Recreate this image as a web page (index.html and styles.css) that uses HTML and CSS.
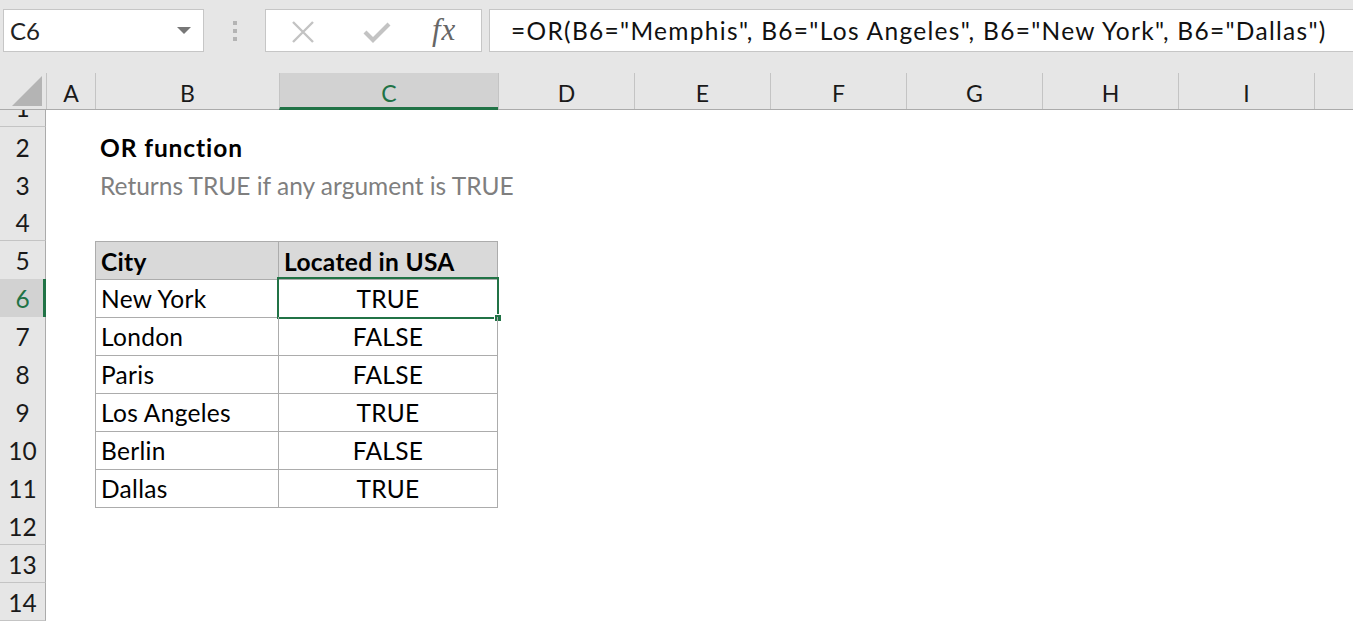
FILE: index.html
```html
<!DOCTYPE html>
<html>
<head>
<meta charset="utf-8">
<link rel="stylesheet" href="styles.css">
</head>
<body>
<div class="app">
  <div class="toolbar">
    <div class="namebox">
      <span class="name">C6</span>
      <svg class="caret" width="14" height="8" viewBox="0 0 14 8"><path d="M0 0H14L7 7Z" fill="#777"/></svg>
    </div>
    <div class="grip"><i></i><i></i><i></i></div>
    <div class="fbuttons">
      <svg class="ico" width="26" height="26" viewBox="0 0 26 26"><path d="M3 3L23 23M23 3L3 23" stroke="#c3c3c3" stroke-width="2.4" fill="none"/></svg>
      <svg class="ico" width="30" height="26" viewBox="0 0 30 26"><path d="M3 13L11 21L27 5" stroke="#c3c3c3" stroke-width="4.2" fill="none"/></svg>
      <span class="fx">fx</span>
    </div>
    <div class="formula">=OR(B6="Memphis", B6="Los Angeles", B6="New York", B6="Dallas")</div>
  </div>

  <div class="sheet">
    <div class="row colhead">
      <div class="corner"><svg width="32" height="32" viewBox="0 0 32 32"><path d="M31 1V31H1Z" fill="#b4b4b4"/></svg></div>
      <div class="ch">A</div><div class="ch">B</div><div class="ch sel">C</div><div class="ch">D</div><div class="ch">E</div><div class="ch">F</div><div class="ch">G</div><div class="ch">H</div><div class="ch">I</div><div class="ch"></div>
    </div>
    <div class="row r1"><div class="rh"><span>1</span></div></div>
    <div class="row"><div class="rh">2</div><div class="cell b title">OR function</div></div>
    <div class="row"><div class="rh">3</div><div class="cell b sub">Returns TRUE if any argument is TRUE</div></div>
    <div class="row"><div class="rh">4</div></div>
    <div class="row"><div class="rh">5</div><div class="cell b tb th top left">City</div><div class="cell c tb th top">Located in USA</div></div>
    <div class="row"><div class="rh selr">6</div><div class="cell b tb left">New York</div><div class="cell c tb ctr active">TRUE<span class="selbox"><span class="handle"></span></span></div></div>
    <div class="row"><div class="rh">7</div><div class="cell b tb left">London</div><div class="cell c tb ctr">FALSE</div></div>
    <div class="row"><div class="rh">8</div><div class="cell b tb left">Paris</div><div class="cell c tb ctr">FALSE</div></div>
    <div class="row"><div class="rh">9</div><div class="cell b tb left">Los Angeles</div><div class="cell c tb ctr">TRUE</div></div>
    <div class="row"><div class="rh">10</div><div class="cell b tb left">Berlin</div><div class="cell c tb ctr">FALSE</div></div>
    <div class="row"><div class="rh">11</div><div class="cell b tb left">Dallas</div><div class="cell c tb ctr">TRUE</div></div>
    <div class="row"><div class="rh">12</div></div>
    <div class="row"><div class="rh">13</div></div>
    <div class="row"><div class="rh">14</div></div>
  </div>
</div>
</body>
</html>
```

FILE: styles.css
```css
* { box-sizing: border-box; }
html, body { margin: 0; padding: 0; }
body {
  width: 1353px;
  height: 621px;
  overflow: hidden;
  background: #fff;
  font-family: "Lato", "Open Sans", sans-serif;
  font-variant-ligatures: none;
  color: #000;
}
.app { display: flex; flex-direction: column; height: 621px; }

.toolbar {
  height: 73px;
  flex: none;
  background: #e6e6e6;
  display: flex;
  align-items: flex-start;
  padding: 9px 0 0 3px;
}
.namebox {
  width: 201px;
  height: 43px;
  background: #fff;
  border: 1px solid #c6c6c6;
  display: flex;
  align-items: center;
  justify-content: space-between;
  padding: 0 12px 0 6px;
}
.name { font-size: 24px; color: #222; }
.caret { margin-top: 1px; }
.grip {
  width: 61px;
  height: 43px;
  display: flex;
  flex-direction: column;
  align-items: center;
  justify-content: center;
  gap: 4px;
}
.grip i { display: block; width: 4px; height: 4px; background: #b4b4b4; }
.fbuttons {
  width: 217px;
  height: 43px;
  background: #fff;
  border: 1px solid #c6c6c6;
  display: flex;
  align-items: center;
  padding: 0 0 0 24px;
}
.fbuttons .ico:nth-child(1) { margin-right: 46px; margin-top: 2px; }
.fbuttons .ico:nth-child(2) { margin-right: 40px; margin-top: 2px; }
.fx {
  font-family: "Liberation Serif", serif;
  font-style: italic;
  font-size: 31px;
  color: #666;
  letter-spacing: 1px;
  margin-top: -2px;
}
.formula {
  margin-left: 7px;
  flex: 1;
  height: 43px;
  background: #fff;
  border: 1px solid #c6c6c6;
  border-right: none;
  font-size: 24.5px;
  letter-spacing: 1.3px;
  line-height: 41px;
  padding-left: 21px;
  color: #111;
  white-space: nowrap;
}

.sheet { flex: 1; display: flex; flex-direction: column; overflow: hidden; }
.row {
  display: grid;
  grid-template-columns: 46px 49px 184px 219px 136px 136px 136px 136px 136px 136px 1fr;
  height: 38px;
  flex: none;
}
.colhead {
  height: 37px;
  background: #e6e6e6;
  border-bottom: 1px solid #ababab;
}
.corner {
  display: flex;
  align-items: flex-end;
  justify-content: flex-end;
  padding: 0 3px 2px 0;
}
.ch {
  font-size: 23px;
  color: #1a1a1a;
  display: flex;
  align-items: center;
  justify-content: center;
  border-left: 1px solid #c4c4c4;
  padding-top: 4px;
}
.ch.sel {
  background: #d2d2d2;
  color: #217346;
  border-bottom: 3px solid #217346;
  margin-bottom: -1px;
  padding-top: 6px;
}
.r1 { height: 17px; }
.r1 .rh { overflow: hidden; align-items: flex-end; padding-top: 0; }
.r1 .rh span { display: block; margin-bottom: 5px; line-height: 26px; }

.rh {
  grid-column: 1;
  background: #e6e6e6;
  border-right: 1px solid #ababab;
  border-bottom: 1px solid #c4c4c4;
  font-size: 24.5px;
  color: #1a1a1a;
  display: flex;
  align-items: center;
  justify-content: center;
  padding-top: 1px;
}
.rh.selr {
  background: #d2d2d2;
  color: #217346;
  border-right: 3px solid #217346;
  padding-left: 2px;
}

.cell {
  font-size: 24.5px;
  letter-spacing: 0.3px;
  line-height: 38px;
  padding: 2px 0 0 5px;
  white-space: nowrap;
  position: relative;
}
.cell.b { grid-column: 3; }
.cell.c { grid-column: 4; }
.title { font-weight: 700; letter-spacing: 0.9px; }
.sub { color: #7f7f7f; letter-spacing: 0; }
.tb {
  border-right: 1px solid #acacac;
  border-bottom: 1px solid #acacac;
  line-height: 36px;
}
.tb.left { border-left: 1px solid #acacac; }
.tb.top { border-top: 1px solid #acacac; line-height: 35px; }
.th { background: #d9d9d9; font-weight: 700; }
.ctr { text-align: center; padding-left: 0; }

.selbox {
  position: absolute;
  left: -2px;
  top: -2px;
  right: -2px;
  bottom: -2px;
  border: 2px solid #217346;
}
.handle {
  position: absolute;
  right: -5px;
  bottom: -5px;
  width: 8px;
  height: 8px;
  background: #217346;
  border: 1px solid #fff;
}
```
